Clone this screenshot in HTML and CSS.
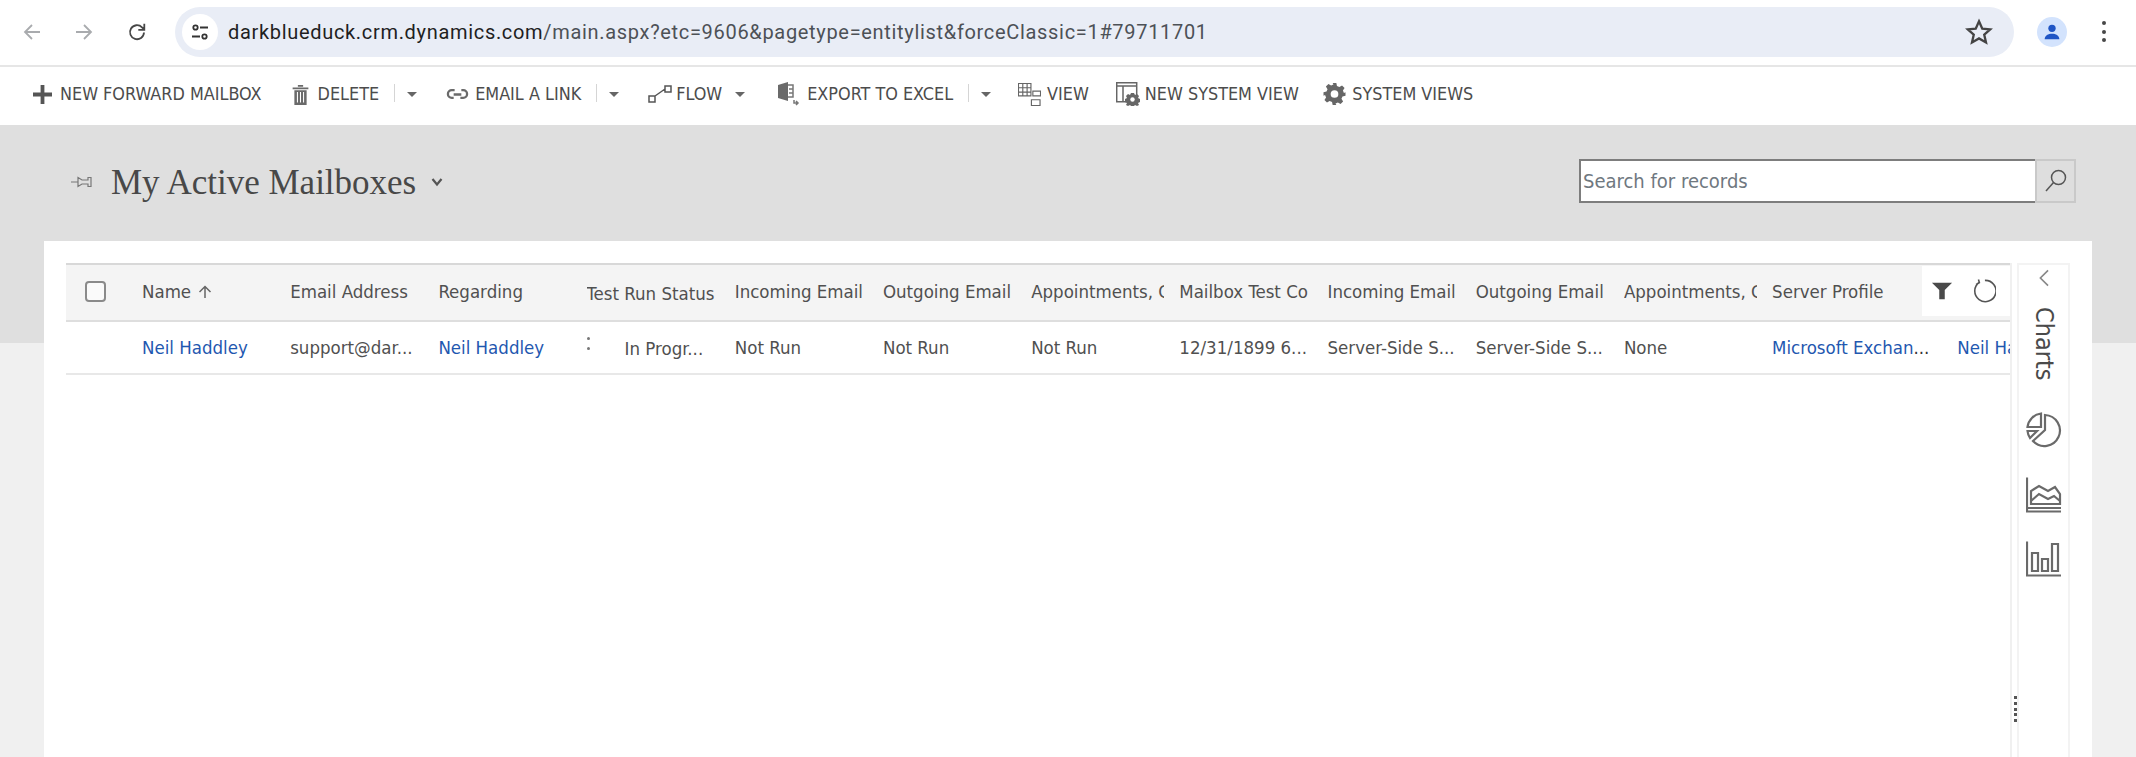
FILE: index.html
```html
<!DOCTYPE html>
<html lang="en">
<head>
<meta charset="utf-8">
<title>My Active Mailboxes</title>
<link rel="stylesheet" href="styles.css">
</head>
<body>
<div class="page">
  <header class="browser">
    <svg class="nav nav-back" viewBox="0 0 20 20"><path d="M18 10H3M10 3 3 10l7 7"/></svg>
    <svg class="nav nav-fwd" viewBox="0 0 20 20"><path d="M2 10h15M10 3l7 7-7 7"/></svg>
    <svg class="nav nav-reload" viewBox="0 0 20 20"><path d="M17 10.500a7 7 0 1 1-2-5.200L17 7.300M17.300 1.800v6h-6"/></svg>
    <div class="omnibox">
      <span class="site-chip"><svg viewBox="0 0 20 20"><circle cx="5.500" cy="5.500" r="2.200"/><path d="M10 5.500h8M2 14.500h8"/><circle cx="14.500" cy="14.500" r="2.200"/></svg></span>
      <span class="url"><span class="host">darkblueduck.crm.dynamics.com</span>/main.aspx?etc=9606&amp;pagetype=entitylist&amp;forceClassic=1#79711701</span>
      <svg class="star" viewBox="0 0 24 24"><path d="m12 2.800 2.800 6.300 6.800.7-5.100 4.500 1.500 6.700-6-3.500-6 3.500 1.500-6.700-5.100-4.500 6.800-.7z"/></svg>
    </div>
    <span class="avatar"><svg viewBox="0 0 24 24"><circle cx="12" cy="8" r="4"/><path d="M4 20c0-4 4-6 8-6s8 2 8 6z"/></svg></span>
    <span class="kebab"><i></i><i></i><i></i></span>
  </header>

  <nav class="toolbar">
    <button class="tool t-new"><svg class="ic ic-plus" viewBox="0 0 20 20"><path d="M8 0h4v8h8v4h-8v8H8v-8H0V8h8z"/></svg>NEW FORWARD MAILBOX</button>
    <button class="tool t-del"><svg class="ic ic-trash" viewBox="0 0 20 24"><path d="M1 4h18v2H1zM7 1h6v2H7zM3 7h14v17H3z"/><path class="cut" d="M6.500 9v12M10 9v12M13.500 9v12"/></svg>DELETE</button>
    <span class="sep"></span><span class="caret c1"></span>
    <button class="tool t-mail"><svg class="ic ic-link" viewBox="0 0 24 12"><path d="M9 2H6a4 4 0 0 0 0 8h2M15 10h3a4 4 0 0 0 0-8h-2M8 6.500h8"/></svg>EMAIL A LINK</button>
    <span class="sep"></span><span class="caret c1"></span>
    <button class="tool t-flow"><svg class="ic ic-flow" viewBox="0 0 24 18"><path d="M1 11h6v6H1zM17 1h6v6h-6zM7 11 17 4"/></svg>FLOW</button>
    <span class="caret c2"></span>
    <button class="tool t-xl"><svg class="ic ic-xl" viewBox="0 0 22 24"><path class="f" d="M0 3l10-3v19L0 16z"/><path class="s" d="M10 3h5v12h-5M11 7h4M11 11h4"/><path class="s" d="M16 18v3h4M18 19l2 2-2 2"/></svg>EXPORT TO EXCEL</button>
    <span class="sep"></span><span class="caret c1"></span>
    <button class="tool t-view"><svg class="ic ic-view" viewBox="0 0 24 24"><path d="M.5.5h13v13H.500zM5 .5v13M9.500.5v13M.5 5h13M.5 9.500h13M15.500 8.500h8v5h-8zM14 17.500h9v6h-9z"/></svg>VIEW</button>
    <button class="tool t-nsv"><svg class="ic ic-nsv" viewBox="0 0 24 24"><path d="M.7.7h20v19H.700zM.7 4h20M7 4v15.700"/><path class="f" d="M15 11h3l1 2 2-1 2 2-1 2 2 1v3l-2 1 1 2-2 1-2-1-1 1h-3l-1-1-2 1-2-1 1-2-2-1v-3l2-1-1-2 2-2 2 1z"/><circle class="h" cx="16.500" cy="17.500" r="2.200"/></svg>NEW SYSTEM VIEW</button>
    <button class="tool t-sv"><svg class="ic ic-gear" viewBox="0 0 24 24"><path d="M10 0h4l.7 3.300 2.600 1.100 2.900-1.800 2.800 2.800-1.800 2.900 1.100 2.600L24 10v4l-3.300.7-1.100 2.600 1.800 2.900-2.800 2.800-2.900-1.800-2.600 1.100L14 24h-4l-.7-3.300-2.600-1.100-2.900 1.800-2.800-2.800 1.800-2.900-1.100-2.600L0 14v-4l3.300-.7 1.100-2.600-1.800-2.900 2.800-2.800 2.900 1.800 2.600-1.100z"/><circle class="h" cx="12" cy="12" r="4.200"/></svg>SYSTEM VIEWS</button>
  </nav>

  <section class="band">
    <div class="band-head">
      <svg class="pin" viewBox="0 0 22 14"><path d="M0 7h7M7 2.500l4 2.500h6V2.500h3v9h-3V9h-6l-4 2.500z"/></svg>
      <h1 class="title">My Active Mailboxes</h1>
      <svg class="title-chev" viewBox="0 0 12 10"><path d="M1.500 2 6 7.500 10.500 2"/></svg>
      <div class="search">
        <input class="search-input" type="text" placeholder="Search for records">
        <span class="search-btn"><svg viewBox="0 0 24 24"><circle cx="14.500" cy="8.500" r="7"/><path d="M9.500 13.500 2 22"/></svg></span>
      </div>
    </div>
  </section>

  <main class="card">
    <div class="grid-area">
      <div class="grid">
        <div class="grid-row head">
          <span class="cell check"><span class="box"></span></span>
          <span class="cell">Name <svg class="sort" viewBox="0 0 14 14"><path d="M7 13V1.500M1.500 7 7 1.500 12.500 7"/></svg></span>
          <span class="cell">Email Address</span>
          <span class="cell">Regarding</span>
          <span class="cell low">Test Run Status</span>
          <span class="cell">Incoming Email</span>
          <span class="cell">Outgoing Email</span>
          <span class="cell">Appointments, C</span>
          <span class="cell">Mailbox Test Co</span>
          <span class="cell">Incoming Email</span>
          <span class="cell">Outgoing Email</span>
          <span class="cell">Appointments, C</span>
          <span class="cell">Server Profile</span>
        </div>
        <div class="grid-row body">
          <span class="cell check"></span>
          <a class="cell link">Neil Haddley</a>
          <span class="cell">support@dar...</span>
          <a class="cell link">Neil Haddley</a>
          <span class="cell status"><span class="spinner"><i></i><i></i></span><span>In Progr...</span></span>
          <span class="cell">Not Run</span>
          <span class="cell">Not Run</span>
          <span class="cell">Not Run</span>
          <span class="cell">12/31/1899 6...</span>
          <span class="cell">Server-Side S...</span>
          <span class="cell">Server-Side S...</span>
          <span class="cell">None</span>
          <a class="cell link wide">Microsoft Exchan<span class="dots">...</span></a>
          <a class="cell link last">Neil Ha</a>
        </div>
        <div class="head-tools">
          <svg class="filter" viewBox="0 0 24 20"><path d="M1 1h22l-8 8v10H9V9z"/></svg>
          <svg class="refresh" viewBox="0 0 26 26"><path d="M8 3.500A11.500 11.500 0 1 0 14 1.500M7 .5 8 4l-3.500 2"/></svg>
        </div>
      </div>
      <div class="splitter"><i></i><i></i><i></i><i></i><i></i></div>
      <aside class="charts">
        <svg class="chev" viewBox="0 0 12 20"><path d="M10.500 1.500 2 10l8.500 8.500"/></svg>
        <span class="charts-label">Charts</span>
        <svg class="chart-ic c-pie" viewBox="0 0 36 36"><path d="M19 3a15.500 15.500 0 1 1-12 26l12-11z"/><path d="M15 1.500A15.500 15.500 0 0 0 1.500 15H15zM1.500 19A15 15 0 0 0 4 26l7-7z"/></svg>
        <svg class="chart-ic c-area" viewBox="0 0 36 36"><path d="M1 .5v34h34M1 31h34M5 27V14l8-5 9 5 7-4 5 7v10zM5 24l8-7 9 5 6-3 6 5"/></svg>
        <svg class="chart-ic c-bar" viewBox="0 0 36 36"><path d="M1 .5v34h34M6 12h6v18H6zM16 18h6v12h-6zM26 3h6v27h-6z"/></svg>
      </aside>
    </div>
  </main>
</div>
</body>
</html>
```
FILE: styles.css
```css
* { box-sizing: border-box; }
html, body { margin: 0; padding: 0; background: #f0f0f0; }
.page { width: 2136px; height: 757px; overflow: hidden; position: relative; font-family: "DejaVu Sans Condensed", "DejaVu Sans", sans-serif; color: #505050; }

/* browser chrome */
.browser { height: 67px; background: #fff; border-bottom: 2px solid #e6e6e6; display: flex; align-items: flex-start; padding-top: 7px; }
.nav { width: 20px; height: 20px; margin-top: 15px; fill: none; stroke-width: 1.800; flex: none; }
.nav-back { margin-left: 22px; stroke: #a9abae; }
.nav-fwd { margin-left: 32px; stroke: #a9abae; }
.nav-reload { margin-left: 33px; stroke: #474747; }
.omnibox { margin-left: 28px; width: 1839px; height: 50px; background: #e9edf6; border-radius: 25px; display: flex; align-items: center; padding-left: 7px; }
.site-chip { width: 36px; height: 36px; background: #fff; border-radius: 50%; display: flex; align-items: center; justify-content: center; flex: none; }
.site-chip svg { width: 20px; height: 20px; fill: none; stroke: #333; stroke-width: 1.800; }
.url { margin-left: 10px; font: 20px/24px Roboto, sans-serif; color: #4d5156; letter-spacing: .68px; white-space: nowrap; flex: 1; }
.host { color: #1f1f1f; }
.star { width: 28px; height: 28px; margin-right: 21px; fill: none; stroke: #444; stroke-width: 2; flex: none; }
.avatar { margin-left: 23px; width: 30px; height: 30px; margin-top: 10px; background: #d3e3fd; border-radius: 50%; display: flex; align-items: center; justify-content: center; flex: none; }
.avatar svg { width: 22px; height: 22px; fill: #1f55c5; }
.kebab { margin-left: 35px; margin-top: 14px; display: flex; flex-direction: column; gap: 4.500px; width: 4px; flex: none; }
.kebab i { width: 4px; height: 4px; border-radius: 50%; background: #474747; display: block; }

/* command bar */
.toolbar { height: 58px; background: #fff; display: flex; align-items: center; padding: 0 0 4px 33px; }
.tool { border: 0; background: none; padding: 0; display: flex; align-items: center; font: 17.850px/20px "DejaVu Sans Condensed", sans-serif; color: #4c4c4c; white-space: nowrap; flex: none; }
.ic { flex: none; fill: #6a6a6a; }
.ic-plus { width: 19px; height: 19px; margin-right: 8px; fill: #555; }
.ic-trash { width: 19px; height: 21px; margin-right: 8px; }
.ic-trash .cut { fill: none; stroke: #fff; stroke-width: 1.200; }
.ic-link { width: 23px; height: 12px; margin-right: 6px; fill: none; stroke: #6a6a6a; stroke-width: 2.400; }
.ic-flow { width: 24px; height: 18px; margin-right: 4px; fill: none; stroke: #555; stroke-width: 1.500; }
.ic-xl { width: 22px; height: 24px; margin-right: 7px; }
.ic-xl .s { fill: none; stroke: #777; stroke-width: 1.500; }
.ic-view { width: 23px; height: 23px; margin-right: 6px; fill: none; stroke: #666; stroke-width: 1.200; }
.ic-nsv { width: 24px; height: 24px; margin-right: 5px; fill: none; stroke: #666; stroke-width: 1.500; }
.ic-nsv .f { fill: #666; stroke: none; }
.ic-nsv .h { fill: #fff; stroke: none; }
.ic-gear { width: 23px; height: 22px; margin-right: 6px; fill: #666; }
.ic-gear .h { fill: #fff; }
.t-del { margin-left: 29px; }
.t-mail { margin-left: 29px; }
.t-flow { margin-left: 29px; }
.t-xl { margin-left: 33px; }
.t-view { margin-left: 27px; }
.t-nsv { margin-left: 27px; }
.t-sv { margin-left: 24.500px; }
.sep { width: 1px; height: 18px; background: #d5d5d5; margin-left: 15px; margin-top: -3px; flex: none; }
.caret { width: 0; height: 0; border-left: 5px solid transparent; border-right: 5px solid transparent; border-top: 5px solid #666; flex: none; }
.c1 { margin-left: 12px; }
.c2 { margin-left: 13px; }

/* gray band */
.band { height: 218px; background: #dfdfdf; }
.band-head { height: 116px; display: flex; align-items: flex-start; }
.pin { width: 22px; height: 14px; margin: 50px 0 0 71px; fill: none; stroke: #777; stroke-width: 1.200; flex: none; }
.title { margin: 35px 0 0 18px; font: 400 35px/46px "Liberation Serif", serif; color: #484848; white-space: nowrap; }
.title-chev { width: 12px; height: 10px; margin: 52px 0 0 15px; fill: none; stroke: #555; stroke-width: 2.200; flex: none; }
.search { margin: 34px 60px 0 auto; display: flex; height: 44px; flex: none; }
.search-input { width: 456px; height: 44px; border: 2px solid #7d7d7d; border-right: 0; background: #fff; padding: 0 2px; font: 20px "DejaVu Sans Condensed", sans-serif; outline: 0; }
.search-input::placeholder { color: #6f7880; opacity: 1; }
.search-btn { width: 41px; height: 44px; background: #dedede; border: 2px solid #c9c9c9; display: flex; align-items: center; justify-content: center; }
.search-btn svg { width: 24px; height: 26px; fill: none; stroke: #555; stroke-width: 1.500; }

/* white card */
.card { margin: -102px 44px 0; background: #fff; height: 520px; padding: 22px 22px 0 22px; }
.grid-area { display: flex; height: 498px; align-items: stretch; }
.grid { width: 1946px; height: 100%; position: relative; overflow: hidden; border-right: 2px solid #f0f0f0; flex: none; }
.grid-row { display: grid; grid-template-columns: 76px repeat(12, 148.200px) 185px; align-items: center; white-space: nowrap; font-size: 18.500px; line-height: 24px; }
.head { height: 59px; background: #f4f4f4; border-top: 2px solid #d8d8d8; border-bottom: 2px solid #dedede; }
.body { height: 53px; border-bottom: 2px solid #e8e8e8; }
.cell { display: block; overflow: hidden; white-space: nowrap; }
.head .cell { width: 133px; margin-top: -1px; }
.head .low { padding-top: 3px; }
.head .check { overflow: visible; width: 76px; margin-top: -3px; }
.check { padding-left: 19px; }
.box { display: block; width: 21px; height: 21px; border: 2px solid #8a8a8a; border-radius: 4px; background: #fafafa; }
.sort { width: 14px; height: 14px; fill: none; stroke: #666; stroke-width: 1.500; vertical-align: -1px; margin-left: 2px; }
.link { color: #1f58b0; }
.dots { color: #333; }
.wide { width: 185px; margin-right: -37px; }
.last { padding-left: 37px; }
.status { display: flex; align-items: center; }
.status span:last-child { margin-left: 33px; margin-top: 3px; }
.spinner { width: 5px; display: flex; flex-direction: column; gap: 7px; margin-top: -8px; flex: none; }
.spinner i { width: 3px; height: 3px; background: #777; border-radius: 50%; display: block; }
.head-tools { position: absolute; top: 3px; right: 0; width: 88px; height: 50px; background: #fff; display: flex; align-items: center; padding-left: 9px; gap: 19px; }
.filter { width: 22px; height: 20px; fill: #4a4a4a; flex: none; }
.refresh { width: 24px; height: 24px; fill: none; stroke: #555; stroke-width: 1.700; flex: none; }
.splitter { width: 5px; display: flex; flex-direction: column; gap: 2.800px; padding: 433px 0 0 2px; flex: none; }
.splitter i { width: 3px; height: 3px; background: #555; display: block; flex: none; }
.charts { width: 53px; flex: none; border: 2px solid #f3f3f3; border-bottom: 0; display: flex; flex-direction: column; align-items: center; color: #4a4a4a; }
.chev { width: 12px; height: 18px; margin-top: 4px; fill: none; stroke: #888; stroke-width: 1.800; flex: none; }
.charts-label { writing-mode: vertical-rl; font: 25px/30px "DejaVu Sans Condensed", sans-serif; margin-top: 20px; }
.chart-ic { width: 36px; height: 36px; fill: none; stroke: #6a6a6a; stroke-width: 2.200; flex: none; }
.c-pie { margin-top: 31px; }
.c-area { margin-top: 29px; }
.c-bar { margin-top: 28px; }
```
